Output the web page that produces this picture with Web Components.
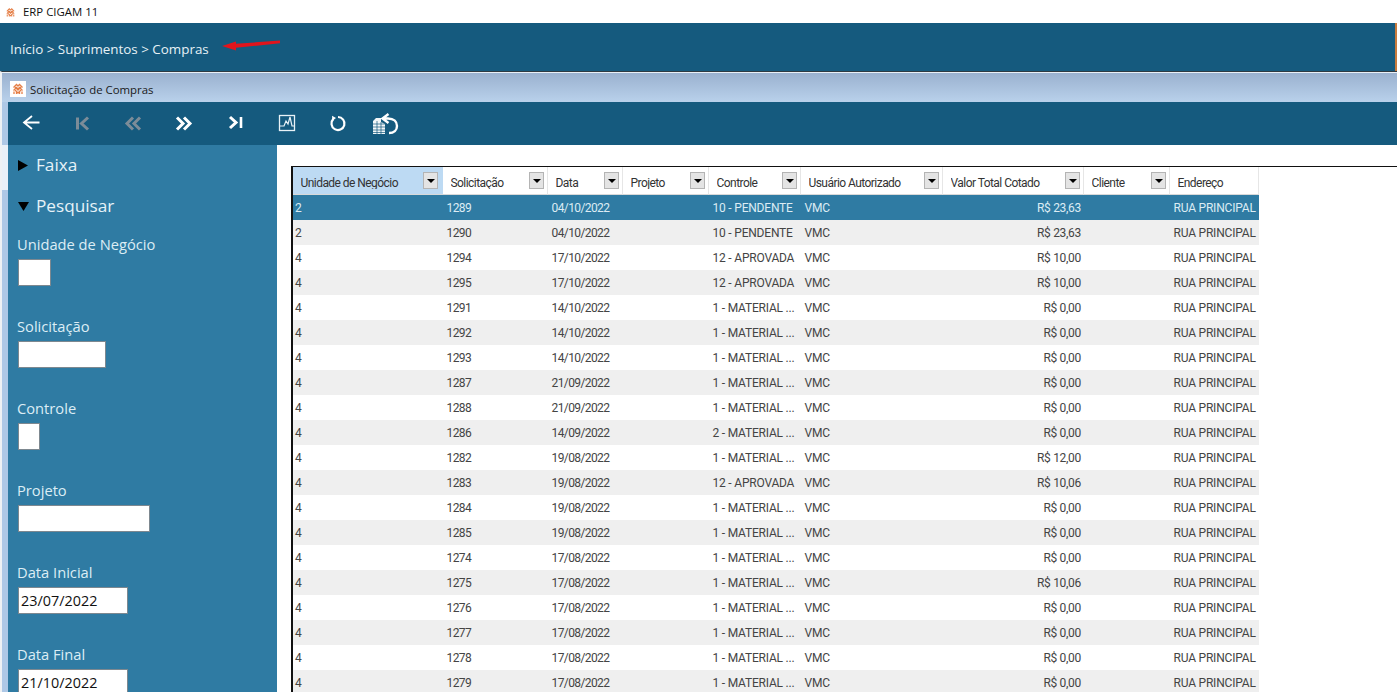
<!DOCTYPE html>
<html lang="pt-BR">
<head>
<meta charset="utf-8">
<title>ERP CIGAM 11</title>
<style>
  html, body { margin: 0; height: 100%; overflow: hidden; background: #fff; }
  body { font-family: "Open Sans", "Liberation Sans", sans-serif; }
</style>
</head>
<body>
<erp-app>
  <erp-titlebar>ERP CIGAM 11</erp-titlebar>
  <erp-breadcrumb>Início &gt; Suprimentos &gt; Compras</erp-breadcrumb>
  <erp-window heading="Solicitação de Compras">
    <erp-toolbar slot="toolbar"></erp-toolbar>
    <erp-sidebar slot="sidebar">
      <side-heading>Faixa</side-heading>
      <side-heading open>Pesquisar</side-heading>
      <search-field label="Unidade de Negócio" size="33"></search-field>
      <search-field label="Solicitação" size="88"></search-field>
      <search-field label="Controle" size="22"></search-field>
      <search-field label="Projeto" size="132"></search-field>
      <search-field label="Data Inicial" size="110">23/07/2022</search-field>
      <search-field label="Data Final" size="110">21/10/2022</search-field>
    </erp-sidebar>
    <data-grid></data-grid>
  </erp-window>
</erp-app>

<script>
const LOGO = `<svg viewBox="0 0 16 16" width="16" height="16" aria-hidden="true">
  <rect width="16" height="16" fill="#fff"/>
  <g stroke="#e57f47" stroke-width="1.300" fill="none">
    <path d="M3.500 6.500 6.500 3.500 8 5 9.500 3.500 12.500 6.500"/>
    <path d="M3.500 9.500 6.500 6.500 8 8 9.500 6.500 12.500 9.500"/>
    <path d="M5 6 8 9 11 6M5 9 8 12 11 9"/>
    <path d="M4 13V10.500M6.500 13V10.500M9.500 13V10.500M12 13V10.500"/>
  </g>
</svg>`;

class ErpApp extends HTMLElement {
  connectedCallback() {
    this.attachShadow({ mode: 'open' }).innerHTML = `
      <style>
        :host { display: flex; flex-direction: column; height: 692px; overflow: hidden; }
      </style>
      <slot></slot>`;
  }
}

class ErpTitlebar extends HTMLElement {
  connectedCallback() {
    this.attachShadow({ mode: 'open' }).innerHTML = `
      <style>
        :host { display: flex; align-items: center; gap: 6px; height: 23px; flex: none; padding-left: 4px;
          background: #fff; color: #111; font: 11.4px/1 "Open Sans", sans-serif; }
        .logo { width: 13px; height: 13px; display: flex; margin-top: 1px; }
        .logo svg { width: 100%; height: 100%; }
        .text { margin-top: 1px; }
      </style>
      <span class="logo">${LOGO}</span><span class="text"><slot></slot></span>`;
  }
}

class ErpBreadcrumb extends HTMLElement {
  connectedCallback() {
    this.attachShadow({ mode: 'open' }).innerHTML = `
      <style>
        :host { display: block; position: relative; height: 48px; flex: none; box-sizing: border-box;
          padding: 16px 0 0 10px; background: #155a7e; border-right: 2px solid #c77a3d;
          color: #e6f1f6; font: 13.4px/20px "Open Sans", sans-serif; }
        /* the red arrow someone drew on top of the screenshot */
        svg { position: absolute; left: 215px; top: 11px; filter: blur(.4px); }
      </style>
      <slot></slot>
      <svg width="75" height="24" viewBox="0 0 75 24" aria-hidden="true">
        <path fill="#e2141c" d="M7 12 21 7.500 21 9.800 65 6.500 65 9.300 21 13.800 21 16.500Z"/>
      </svg>`;
  }
}

class ErpWindow extends HTMLElement {
  connectedCallback() {
    this.attachShadow({ mode: 'open' }).innerHTML = `
      <style>
        :host { display: flex; flex-direction: column; flex: 1; min-height: 0; box-sizing: border-box;
          border-top: 1px solid #2f3a42; border-left: 2px solid #eef1f4; background: #aec8e6; }
        .title { display: flex; align-items: center; gap: 4px; height: 29px; flex: none; padding-left: 8px;
          border-top: 1px solid #eaf0f6;
          background: linear-gradient(#9ab1cf, #b9d1eb); color: #1a1a1a; font: 11.4px/1 "Open Sans", sans-serif; }
        .title svg { display: block; margin-top: 2px; }
        .title span { margin-top: 4px; }
        .tools { margin-left: 6px; }
        .body { display: flex; flex: 1; min-height: 0; padding-left: 6px;
          background: linear-gradient(#e9f0f8 0 45px, #aec8e6 45px); }
        .main { flex: 1; min-width: 0; background: #fff; padding: 21px 0 0 14px; overflow: hidden; }
      </style>
      <div class="title">${LOGO}<span>${this.getAttribute('heading')}</span></div>
      <div class="tools"><slot name="toolbar"></slot></div>
      <div class="body">
        <slot name="sidebar"></slot>
        <div class="main"><slot></slot></div>
      </div>`;
  }
}

// gap = space before the icon, they are not evenly spaced in the real app
const TOOLS = [
  { gap: 9, svg: `<path d="M22.500 13.500H7M15 7 7 13.500 15 20" stroke="#fff" stroke-width="1.800"/>` },
  { gap: 24, svg: `<path d="M8.500 8.500V20.500M19 8.500 12.500 14.500 19 20.500" stroke="#7c8c98" stroke-width="3"/>` },
  { gap: 22, svg: `<path d="M14 8.500 8 14.500 14 20.500M21 8.500 15 14.500 21 20.500" stroke="#7c8c98" stroke-width="3"/>` },
  { gap: 22, svg: `<path d="M8 8.500 14 14.500 8 20.500M15 8.500 21 14.500 15 20.500" stroke="#fff" stroke-width="3"/>` },
  { gap: 24, svg: `<path d="M9 8 15 13.500 9 19" stroke="#fff" stroke-width="3"/><path d="M20 8V19" stroke="#fff" stroke-width="2.600"/>` },
  { gap: 24, svg: `<rect x="6.500" y="6.500" width="15" height="15" stroke="#e8f2f7" stroke-width="1.300"/>
      <path d="M7 17H11L13 12 15 15 17 8 19 17H21.500" stroke="#e8f2f7" stroke-width="1.200"/>` },
  { gap: 23, svg: `<path d="M14 8A6.500 6.500 0 1 1 9.400 9.900" stroke="#fff" stroke-width="2.200"/><path d="M8 6.800 8.400 11.800 12 9Z" fill="#fff"/>` },
  { gap: 19, svg: `<path d="M2 12 5 9H10V13L14 15V25H2Z" fill="#f2f6f8"/>
      <path d="M2 15H14M2 18H14M2 21H14M2 23.500H14M6 12V25M10 13V25" stroke="#155a7e" stroke-width=".7"/>
      <path d="M17.500 5 11.500 9.500 17.500 14M12 9.500H17C23 9.500 26 13 26 17 26 21 23 24 18 24" stroke="#fff" stroke-width="2.400"/>` },
];

class ErpToolbar extends HTMLElement {
  connectedCallback() {
    const icons = TOOLS.map(t =>
      `<svg viewBox="0 0 28 28" width="28" height="28" fill="none" style="margin-left:${t.gap}px" aria-hidden="true">${t.svg}</svg>`
    ).join('');
    this.attachShadow({ mode: 'open' }).innerHTML = `
      <style>
        :host { display: flex; align-items: flex-start; height: 43px; box-sizing: border-box; padding-top: 7px; background: #155a7e; }
        svg { flex: none; display: block; }
      </style>
      ${icons}`;
  }
}

class ErpSidebar extends HTMLElement {
  connectedCallback() {
    this.attachShadow({ mode: 'open' }).innerHTML = `
      <style>
        :host { display: flex; flex-direction: column; width: 269px; flex: none; box-sizing: border-box;
          padding: 8px 0 0 10px; background: #2f7ba3; color: #dcedf5; overflow: hidden; }
      </style>
      <slot></slot>`;
  }
}

class SideHeading extends HTMLElement {
  connectedCallback() {
    const open = this.hasAttribute('open');
    const tri = open ? '0,1 11,1 5.500,10' : '0,0 10,5.500 0,11';
    this.attachShadow({ mode: 'open' }).innerHTML = `
      <style>
        :host { display: flex; align-items: center; gap: 7px; height: 24px; flex: none; margin-bottom: 17px;
          color: #e6f2f8; font: 17.200px/24px "Open Sans", sans-serif; }
        svg { display: block; flex: none; }
      </style>
      <svg width="11" height="11" viewBox="0 0 11 11" aria-hidden="true"><polygon points="${tri}" fill="#000"/></svg>
      <span><slot></slot></span>`;
  }
}

class SearchField extends HTMLElement {
  connectedCallback() {
    this.attachShadow({ mode: 'open' }).innerHTML = `
      <style>
        :host { display: block; flex: none; height: 82px; margin-top: -1px; margin-bottom: 1px; }
        .label { margin-left: -1px; font: 14.700px/20px "Open Sans", sans-serif; color: #dcedf5; }
        .box { box-sizing: border-box; width: ${this.getAttribute('size')}px; height: 27px; margin-top: 5px;
          padding-left: 2px; background: #fff; border: 1px solid #7d8890; color: #111;
          font: 14.400px/25px "Open Sans", sans-serif; }
      </style>
      <div class="label">${this.getAttribute('label')}</div>
      <div class="box"><slot></slot></div>`;
  }
}

class GridHeader extends HTMLElement {
  connectedCallback() {
    this.attachShadow({ mode: 'open' }).innerHTML = `
      <style>
        :host { display: flex; align-items: center; box-sizing: border-box; height: 28px; padding: 0 3px 0 7.500px;
          border-right: 1px solid #e6e6e6; border-bottom: 1px solid #d9d9d9; background: #fff; min-width: 0;
          color: #333; font: 12px/1 Roboto, "Liberation Sans", sans-serif; letter-spacing: -.55px; }
        :host([active]) { background: #bddaf3; padding-right: 5px; border-right: 0; }
        .text { flex: 1; white-space: nowrap; overflow: hidden; margin-top: 5px; }
        .btn { flex: none; width: 15px; height: 17px; box-sizing: border-box; display: flex; align-items: center; justify-content: center;
          background: #e4e4e4; border: 1px solid #b4b4b4; }
        :host([plain]) .btn { display: none; }
        .btn i { width: 0; height: 0; border: 4px solid transparent; border-top: 4.500px solid #000; border-bottom: 0; }
      </style>
      <span class="text"><slot></slot></span><span class="btn"><i></i></span>`;
  }
}

const WIDTHS = [150, 105, 75, 86, 92, 142, 141, 86, 89];
const COLUMNS = ['Unidade de Negócio', 'Solicitação', 'Data', 'Projeto', 'Controle', 'Usuário Autorizado', 'Valor Total Cotado', 'Cliente', 'Endereço'];
const MAT1 = '1 - MATERIAL ...', MAT2 = '2 - MATERIAL ...', PEND = '10 - PENDENTE', APRO = '12 - APROVADA';
const ROWS = [
  ['2', '1289', '04/10/2022', PEND, 'R$ 23,63'],
  ['2', '1290', '04/10/2022', PEND, 'R$ 23,63'],
  ['4', '1294', '17/10/2022', APRO, 'R$ 10,00'],
  ['4', '1295', '17/10/2022', APRO, 'R$ 10,00'],
  ['4', '1291', '14/10/2022', MAT1, 'R$ 0,00'],
  ['4', '1292', '14/10/2022', MAT1, 'R$ 0,00'],
  ['4', '1293', '14/10/2022', MAT1, 'R$ 0,00'],
  ['4', '1287', '21/09/2022', MAT1, 'R$ 0,00'],
  ['4', '1288', '21/09/2022', MAT1, 'R$ 0,00'],
  ['4', '1286', '14/09/2022', MAT2, 'R$ 0,00'],
  ['4', '1282', '19/08/2022', MAT1, 'R$ 12,00'],
  ['4', '1283', '19/08/2022', APRO, 'R$ 10,06'],
  ['4', '1284', '19/08/2022', MAT1, 'R$ 0,00'],
  ['4', '1285', '19/08/2022', MAT1, 'R$ 0,00'],
  ['4', '1274', '17/08/2022', MAT1, 'R$ 0,00'],
  ['4', '1275', '17/08/2022', MAT1, 'R$ 10,06'],
  ['4', '1276', '17/08/2022', MAT1, 'R$ 0,00'],
  ['4', '1277', '17/08/2022', MAT1, 'R$ 0,00'],
  ['4', '1278', '17/08/2022', MAT1, 'R$ 0,00'],
  ['4', '1279', '17/08/2022', MAT1, 'R$ 0,00'],
];

class DataGrid extends HTMLElement {
  connectedCallback() {
    const head = COLUMNS.map((c, i) =>
      `<grid-header ${i === 0 ? 'active' : ''} ${i === 8 ? 'plain' : ''}>${c}</grid-header>`).join('');
    const body = ROWS.map(([unit, num, date, ctrl, val], i) => {
      const cls = i === 0 ? 'row sel' : i % 2 ? 'row alt' : 'row';
      return `<div class="${cls}">
        <span class="first">${unit}</span><span class="tight">${num}</span><span class="tight">${date}</span><span></span>
        <span>${ctrl}</span><span>VMC</span><span class="val">${val}</span><span></span><span>RUA PRINCIPAL</span>
      </div>`;
    }).join('');
    this.attachShadow({ mode: 'open' }).innerHTML = `
      <style>
        :host { display: block; box-sizing: border-box; border-top: 1px solid #111; border-left: 2px solid #111; height: 100%;
          --cols: ${WIDTHS.map(w => w + 'px').join(' ')}; }
        .head, .row { display: grid; grid-template-columns: var(--cols); width: 966px; }
        .row { height: 25px; align-items: start; color: #444; font: 12px/24px Roboto, "Liberation Sans", sans-serif; letter-spacing: -.2px; }
        .row span { padding: 1px 0 0 3.500px; white-space: nowrap; overflow: hidden; min-width: 0; }
        .row .first { padding-left: 2px; }
        .row .tight { letter-spacing: -.6px; }
        .row .val { padding: 1px 3px 0 0; text-align: right; letter-spacing: -.3px; }
        .alt { background: #efefef; }
        .sel { background: #2f7ba3; color: #dcecf4; }
      </style>
      <div class="head">${head}</div>
      ${body}`;
  }
}

customElements.define('erp-app', ErpApp);
customElements.define('erp-titlebar', ErpTitlebar);
customElements.define('erp-breadcrumb', ErpBreadcrumb);
customElements.define('erp-window', ErpWindow);
customElements.define('erp-toolbar', ErpToolbar);
customElements.define('erp-sidebar', ErpSidebar);
customElements.define('side-heading', SideHeading);
customElements.define('search-field', SearchField);
customElements.define('grid-header', GridHeader);
customElements.define('data-grid', DataGrid);
</script>
</body>
</html>
